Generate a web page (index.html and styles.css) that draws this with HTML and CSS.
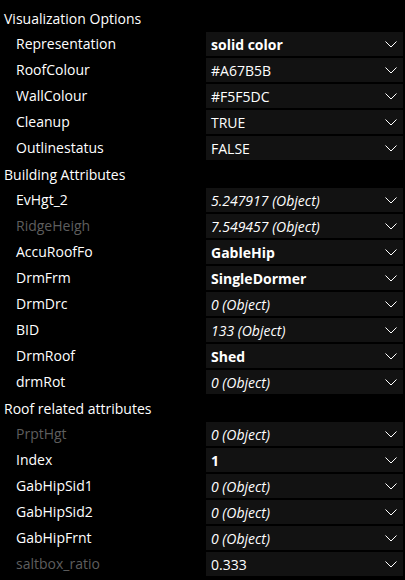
FILE: index.html
```html
<!DOCTYPE html>
<html lang="en">
<head>
    <meta charset="UTF-8">
    <meta name="viewport" content="width=device-width, initial-scale=1.0">
    <title>Property Grid</title>
    <link rel="stylesheet" href="styles.css">
</head>
<body>

<div class="grid">
    <div class="group">Visualization Options</div>
    <div class="row">
        <span class="name">Representation</span>
        <div class="value bold">solid color<svg class="chev" viewBox="0 0 12 7"><path d="M0.5 0.5 L6 6 L11.5 0.5"/></svg></div>
    </div>
    <div class="row">
        <span class="name">RoofColour</span>
        <div class="value">#A67B5B<svg class="chev" viewBox="0 0 12 7"><path d="M0.5 0.5 L6 6 L11.5 0.5"/></svg></div>
    </div>
    <div class="row">
        <span class="name">WallColour</span>
        <div class="value">#F5F5DC<svg class="chev" viewBox="0 0 12 7"><path d="M0.5 0.5 L6 6 L11.5 0.5"/></svg></div>
    </div>
    <div class="row">
        <span class="name">Cleanup</span>
        <div class="value">TRUE<svg class="chev" viewBox="0 0 12 7"><path d="M0.5 0.5 L6 6 L11.5 0.5"/></svg></div>
    </div>
    <div class="row">
        <span class="name">Outlinestatus</span>
        <div class="value">FALSE<svg class="chev" viewBox="0 0 12 7"><path d="M0.5 0.5 L6 6 L11.5 0.5"/></svg></div>
    </div>

    <div class="group">Building Attributes</div>
    <div class="row">
        <span class="name">EvHgt_2</span>
        <div class="value italic">5.247917 (Object)<svg class="chev" viewBox="0 0 12 7"><path d="M0.5 0.5 L6 6 L11.5 0.5"/></svg></div>
    </div>
    <div class="row">
        <span class="name disabled">RidgeHeigh</span>
        <div class="value italic">7.549457 (Object)<svg class="chev" viewBox="0 0 12 7"><path d="M0.5 0.5 L6 6 L11.5 0.5"/></svg></div>
    </div>
    <div class="row">
        <span class="name">AccuRoofFo</span>
        <div class="value bold">GableHip<svg class="chev" viewBox="0 0 12 7"><path d="M0.5 0.5 L6 6 L11.5 0.5"/></svg></div>
    </div>
    <div class="row">
        <span class="name">DrmFrm</span>
        <div class="value bold">SingleDormer<svg class="chev" viewBox="0 0 12 7"><path d="M0.5 0.5 L6 6 L11.5 0.5"/></svg></div>
    </div>
    <div class="row">
        <span class="name">DrmDrc</span>
        <div class="value italic">0 (Object)<svg class="chev" viewBox="0 0 12 7"><path d="M0.5 0.5 L6 6 L11.5 0.5"/></svg></div>
    </div>
    <div class="row">
        <span class="name">BID</span>
        <div class="value italic">133 (Object)<svg class="chev" viewBox="0 0 12 7"><path d="M0.5 0.5 L6 6 L11.5 0.5"/></svg></div>
    </div>
    <div class="row">
        <span class="name">DrmRoof</span>
        <div class="value bold">Shed<svg class="chev" viewBox="0 0 12 7"><path d="M0.5 0.5 L6 6 L11.5 0.5"/></svg></div>
    </div>
    <div class="row">
        <span class="name">drmRot</span>
        <div class="value italic">0 (Object)<svg class="chev" viewBox="0 0 12 7"><path d="M0.5 0.5 L6 6 L11.5 0.5"/></svg></div>
    </div>

    <div class="group">Roof related attributes</div>
    <div class="row">
        <span class="name disabled">PrptHgt</span>
        <div class="value italic">0 (Object)<svg class="chev" viewBox="0 0 12 7"><path d="M0.5 0.5 L6 6 L11.5 0.5"/></svg></div>
    </div>
    <div class="row">
        <span class="name">Index</span>
        <div class="value bold">1<svg class="chev" viewBox="0 0 12 7"><path d="M0.5 0.5 L6 6 L11.5 0.5"/></svg></div>
    </div>
    <div class="row">
        <span class="name">GabHipSid1</span>
        <div class="value italic">0 (Object)<svg class="chev" viewBox="0 0 12 7"><path d="M0.5 0.5 L6 6 L11.5 0.5"/></svg></div>
    </div>
    <div class="row">
        <span class="name">GabHipSid2</span>
        <div class="value italic">0 (Object)<svg class="chev" viewBox="0 0 12 7"><path d="M0.5 0.5 L6 6 L11.5 0.5"/></svg></div>
    </div>
    <div class="row">
        <span class="name">GabHipFrnt</span>
        <div class="value italic">0 (Object)<svg class="chev" viewBox="0 0 12 7"><path d="M0.5 0.5 L6 6 L11.5 0.5"/></svg></div>
    </div>
    <div class="row">
        <span class="name disabled">saltbox_ratio</span>
        <div class="value">0.333<svg class="chev" viewBox="0 0 12 7"><path d="M0.5 0.5 L6 6 L11.5 0.5"/></svg></div>
    </div>
</div>

</body>
</html>
```

FILE: styles.css
```css
body {
    margin: 0;
    padding: 0;
    background-color: #000;
    color: #fff;
    font-family: 'Open Sans', 'Noto Sans', sans-serif;
    font-size: 14px;
}

.grid {
    padding-top: 6px;
}

.group {
    height: 26px;
    line-height: 26px;
    padding-left: 4px;
    white-space: nowrap;
}

.row {
    display: grid;
    grid-template-columns: 206px 197px;
    height: 26px;
}

.name {
    padding-left: 16px;
    line-height: 24px;
    white-space: nowrap;
    overflow: hidden;
}

.name.disabled {
    color: #5e5e5e;
}

.value {
    display: flex;
    align-items: center;
    justify-content: space-between;
    height: 24px;
    padding: 0 6px 0 5px;
    background-color: #121212;
    white-space: nowrap;
}

.value.bold {
    font-weight: 700;
}

.value.italic {
    font-style: italic;
}

.chev {
    width: 12px;
    height: 7px;
    fill: none;
    stroke: #fff;
    stroke-width: 1;
}
```
